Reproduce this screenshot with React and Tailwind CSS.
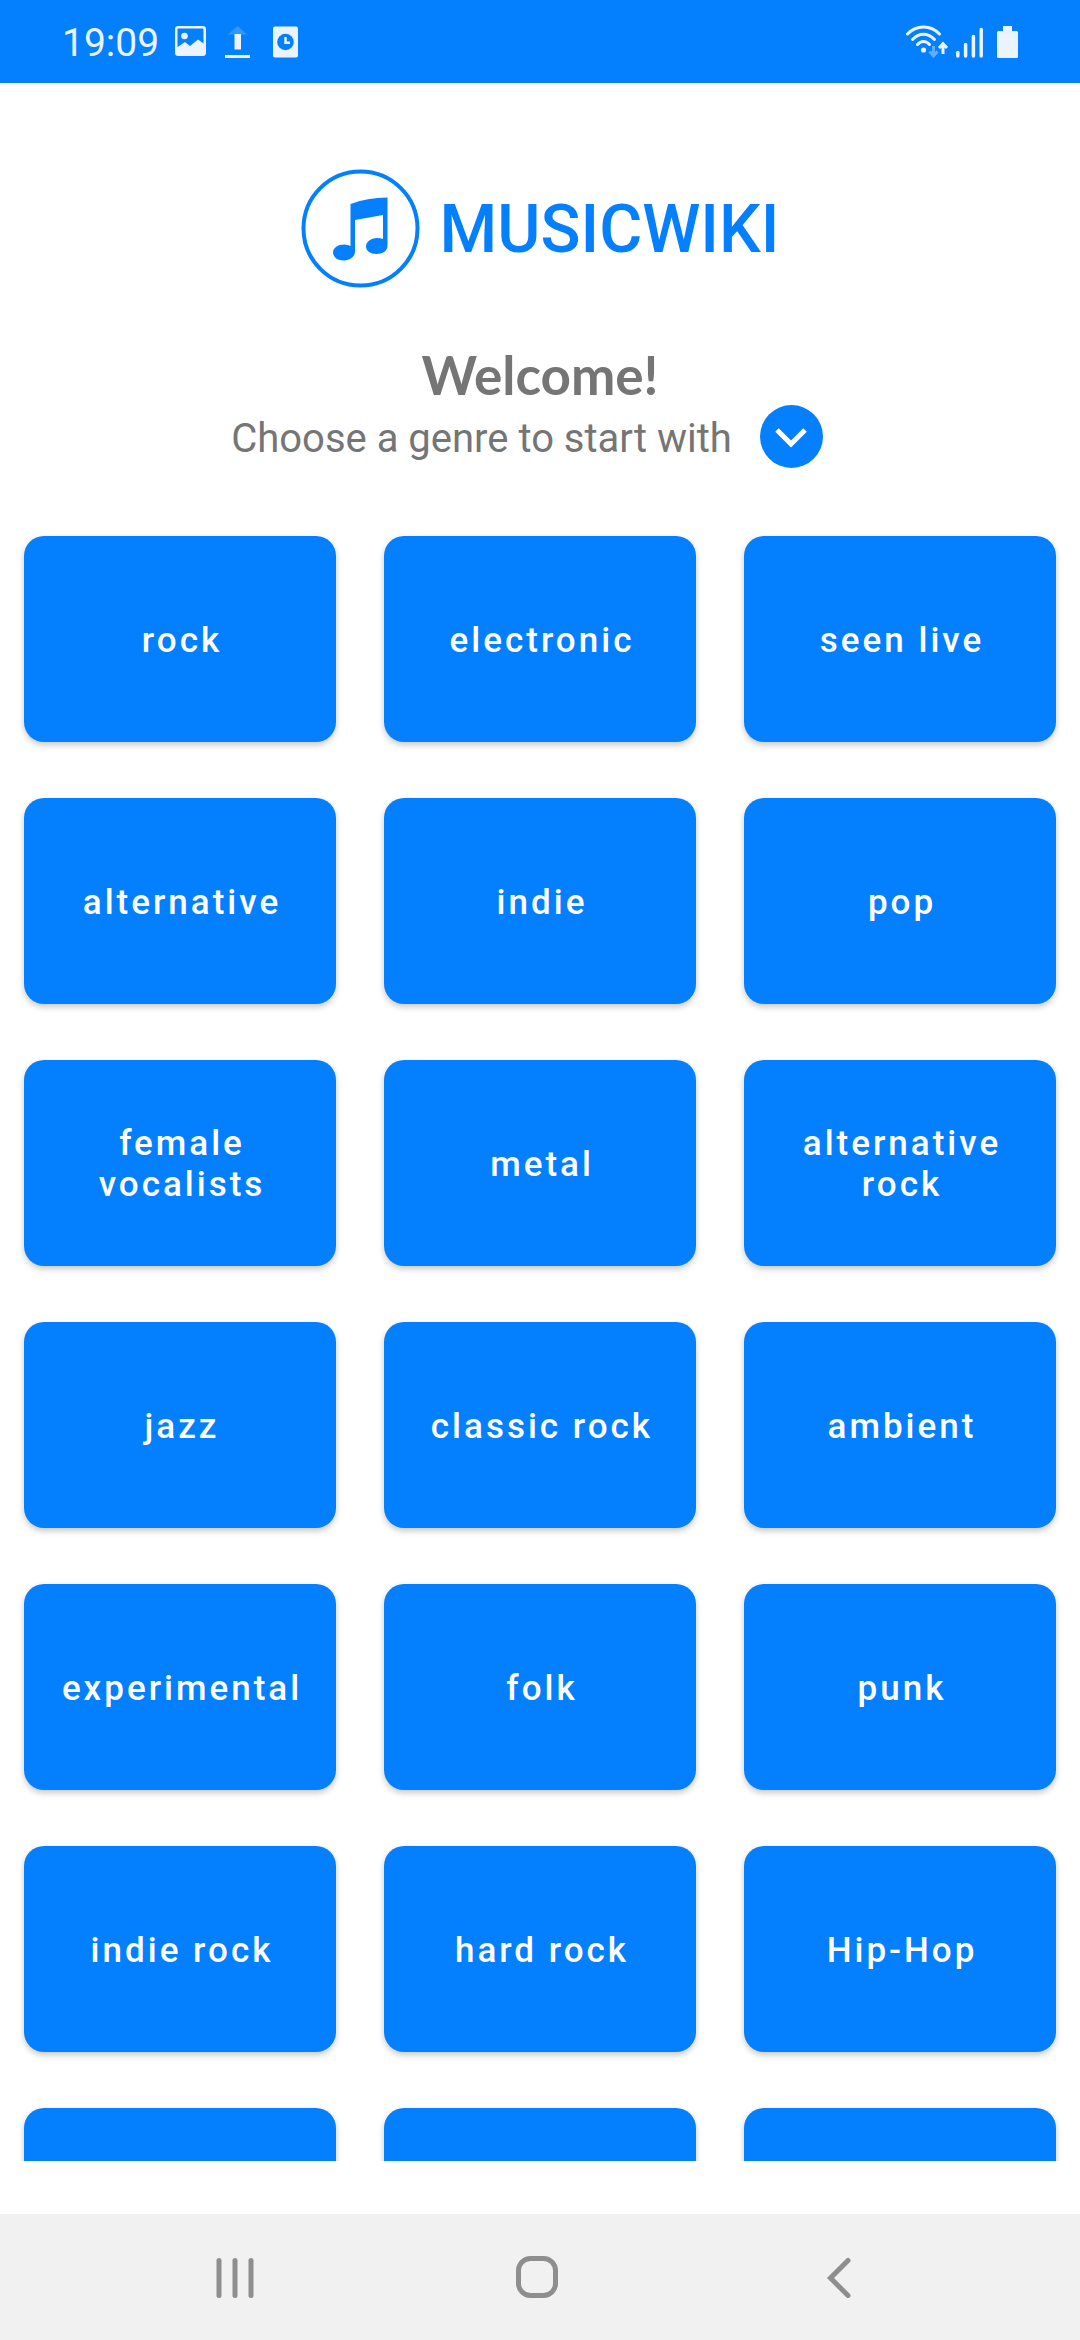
const genres = [
  'rock', 'electronic', 'seen live',
  'alternative', 'indie', 'pop',
  'female vocalists', 'metal', 'alternative rock',
  'jazz', 'classic rock', 'ambient',
  'experimental', 'folk', 'punk',
  'indie rock', 'hard rock', 'Hip-Hop',
];

const upcoming = ['next-1', 'next-2', 'next-3'];

function StatusBar() {
  return (
    <header className="flex h-[83px] shrink-0 items-center justify-between bg-[#0480fe] px-[62px] text-[#eaf4ff]">
      <div className="flex items-center gap-[18px]">
        <time className="pt-0.5 text-[39px] leading-[46px]">19:09</time>
        <div className="-ml-0.5 flex items-center gap-[19px]">
          <svg className="h-[32px] w-[31px]" viewBox="0 0 31 32" fill="none" aria-hidden="true">
            <rect x="1.25" y="1.25" width="28.5" height="27.5" rx="2" stroke="currentColor" strokeWidth="2.5" />
            <circle cx="9.5" cy="10" r="3.3" fill="currentColor" />
            <path d="M2 21.5 10 16l5 4 8-6.500 7 5V29H2Z" fill="currentColor" />
          </svg>
          <svg className="h-[32px] w-[25px]" viewBox="0 0 25 32" fill="currentColor" aria-hidden="true">
            <path d="M12.500 0 22 8.500H3Z" opacity="0.2" />
            <rect x="9.500" y="8" width="6.500" height="15.500" />
            <rect x="0" y="29" width="25" height="3" />
          </svg>
          <svg className="ml-1 h-[32px] w-[25px]" viewBox="0 0 25 32" aria-hidden="true">
            <rect y="0.500" width="25" height="31" rx="2" fill="currentColor" />
            <circle cx="12.500" cy="16" r="8.300" fill="#0480fe" />
            <path d="M12.500 11v5.800h4.500" fill="none" stroke="currentColor" strokeWidth="2.500" />
          </svg>
        </div>
      </div>
      <div className="flex items-center">
        <svg className="h-[34px] w-[42px]" viewBox="0 0 42 34" fill="none" stroke="currentColor" strokeWidth="3" aria-hidden="true">
          <g strokeLinecap="round">
            <path d="M1.500 9C10.500-.3 24.500-.3 33.500 9" />
            <path d="M6.500 14.500C13 7.500 22 7.500 28.500 14.500" />
            <path d="M11.500 19.500c3.500-4 8.500-4 12 0" />
          </g>
          <circle cx="17.500" cy="25" r="2.600" fill="currentColor" stroke="none" />
          <path d="M27.500 21v9M23.500 26.500l4 4.300 4-4.300" opacity="0.4" />
          <path d="M37 29V19.500M33 23l4-4.300 4 4.300" />
        </svg>
        <svg className="ml-2 h-[34px] w-[27px]" viewBox="0 0 27 34" stroke="currentColor" strokeWidth="3.500" strokeLinecap="round" aria-hidden="true">
          <path d="M1.800 27.500v3.500M9.600 19.500V31M17.400 11.500V31M25.200 4.500V31" />
        </svg>
        <svg className="ml-[14px] h-[34px] w-[21px]" viewBox="0 0 21 34" fill="currentColor" aria-hidden="true">
          <path d="M6 1h9v5h4.500Q21 6 21 7.500v24Q21 33 19.500 33h-18Q0 33 0 31.500v-24Q0 6 1.500 6H6Z" />
        </svg>
      </div>
    </header>
  );
}

function Logo() {
  return (
    <div className="flex items-center justify-center gap-5 text-[#0480fe]">
      <svg className="size-[119px]" viewBox="0 0 119 119" aria-hidden="true">
        <circle cx="59.500" cy="59.500" r="57" fill="none" stroke="currentColor" strokeWidth="4" />
        <path d="M49.500 35Q66 28.500 86.500 28.500V77C86.500 82 81.500 85 75.500 85S65 82 65 77.500 70 69 76 69Q80 69 82 70V46L54 51V82.500C54 88 48.500 91.500 42.500 91.500S32 88 32 83.500 37 75.500 43 75.500Q47.500 75.500 49.500 77Z" fill="currentColor" />
      </svg>
      <span className="pt-0.5 text-[66px] font-medium leading-[76px]">MUSICWIKI</span>
    </div>
  );
}

function GenreCard({ name }) {
  return (
    <button
      type="button"
      className="flex h-[206px] items-center justify-center rounded-[20px] bg-[#0480fe] pl-9 pr-8 pt-0.5 text-center text-[35px] font-medium leading-[41px] tracking-[3px] text-white shadow-[0_3px_6px_rgba(0,0,0,0.22)]"
    >
      {name}
    </button>
  );
}

function NavBar() {
  return (
    <nav className="grid h-[126px] shrink-0 grid-cols-3 bg-[#f1f1f1] pl-[84px] pr-[90px] text-[#8e8e8e]">
      <button type="button" aria-label="Recent apps" className="flex items-center justify-center">
        <svg className="size-[42px]" viewBox="0 0 42 42" stroke="currentColor" strokeWidth="5" strokeLinecap="round">
          <path d="M5 4.500v35M21 4.500v35M37 4.500v35" />
        </svg>
      </button>
      <button type="button" aria-label="Home" className="flex items-center justify-center">
        <svg className="size-[42px]" viewBox="0 0 42 42" fill="none" stroke="currentColor" strokeWidth="5">
          <rect x="2.500" y="2.500" width="37" height="37" rx="12" />
        </svg>
      </button>
      <button type="button" aria-label="Back" className="flex items-center justify-center">
        <svg className="size-[42px]" viewBox="0 0 42 42" fill="none" stroke="currentColor" strokeWidth="5" strokeLinecap="round">
          <path d="M30 4.500 12.500 22 30 39.500" />
        </svg>
      </button>
    </nav>
  );
}

export default function App() {
  return (
    <div className="flex h-screen flex-col overflow-hidden bg-white font-[Roboto,sans-serif]">
      <StatusBar />
      <main className="flex min-h-0 flex-1 flex-col pb-[53px] pt-[86px]">
        <Logo />
        <h1 className="mt-[59px] text-center font-[Lato,sans-serif] text-[53px] font-bold leading-[56px] text-[#757575]">
          Welcome!
        </h1>
        <div className="mt-0.5 flex items-center justify-center gap-7 pr-[26px]">
          <p className="pt-1 text-[40px] leading-[48px] text-[#757575]">Choose a genre to start with</p>
          <button type="button" aria-label="Show more genres" className="flex size-[63px] items-center justify-center rounded-full bg-[#0480fe] text-white">
            <svg className="size-[40px]" viewBox="0 0 40 40" fill="none" stroke="currentColor" strokeWidth="5">
              <path d="M6 13l14 14 14-14" />
            </svg>
          </button>
        </div>
        <section aria-label="Genres" className="mt-14 min-h-0 flex-1 overflow-hidden px-6 pt-3">
          <div className="grid grid-cols-3 gap-x-12 gap-y-14">
            {genres.map((name) => (
              <GenreCard key={name} name={name} />
            ))}
            {upcoming.map((id) => (
              <GenreCard key={id} />
            ))}
          </div>
        </section>
      </main>
      <NavBar />
    </div>
  );
}
